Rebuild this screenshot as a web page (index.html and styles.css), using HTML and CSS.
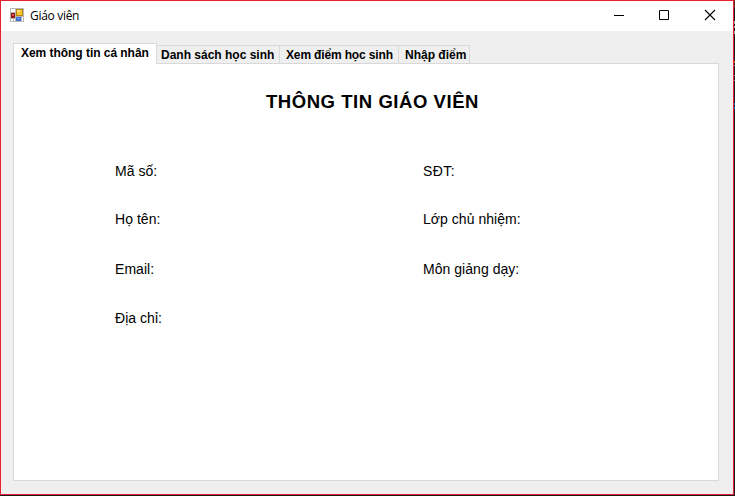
FILE: index.html
```
<!DOCTYPE html>
<html lang="vi">
<head>
<meta charset="utf-8">
<title>Giáo viên</title>
<link rel="stylesheet" href="styles.css">
</head>
<body>
<div class="window">
  <header class="titlebar">
    <svg class="app-icon" width="14" height="14" viewBox="0 0 14 14" shape-rendering="crispEdges">
      <path fill="#b9b9b9" d="M0 0h14v14H0z"/>
      <path fill="#fff" d="M1 1h4v3H1zM1 11h2v2H1zM4 11h1v2H4zM12 9h1v4h-1z"/>
      <path fill="#8f1a14" d="M1 5h4v5H1z"/>
      <path fill="#d9534a" d="M2 6h2v2H2z"/>
      <path fill="#b8860b" d="M6 1h7v7H6z"/>
      <path fill="#f5c62f" d="M7 2h5v5H7z"/>
      <path fill="#ffe68a" d="M7 2h3v2H7z"/>
      <path fill="#3a6fd0" d="M6 9h5v4H6z"/>
      <path fill="#76a8f5" d="M7 10h3v1H7z"/>
    </svg>
    <h1 class="title">Giáo viên</h1>
    <div class="controls">
      <svg width="46" height="30" viewBox="0 0 46 30"><path d="M19 14.5h10" stroke="#000"/></svg>
      <svg width="46" height="30" viewBox="0 0 46 30"><path d="M18.5 9.5h9v9h-9z" fill="none" stroke="#000"/></svg>
      <svg width="46" height="30" viewBox="0 0 46 30"><path d="M18 9l10 10M28 9L18 19" stroke="#000" stroke-width="1.1"/></svg>
    </div>
  </header>
  <main class="content">
    <nav class="tabs">
      <span class="tab tab-active">Xem thông tin cá nhân</span>
      <span class="tab tab-list">Danh sách học sinh</span>
      <span class="tab tab-view">Xem điểm học sinh</span>
      <span class="tab tab-enter">Nhập điểm</span>
    </nav>
    <section class="panel">
      <h2 class="heading">THÔNG TIN GIÁO VIÊN</h2>
      <div class="fields">
        <span>Mã số:</span><span class="phone">SĐT:</span>
        <span>Họ tên:</span><span>Lớp chủ nhiệm:</span>
        <span>Email:</span><span>Môn giảng dạy:</span>
        <span>Địa chỉ:</span>
      </div>
    </section>
  </main>
</div>
<div class="backdrop"></div>
</body>
</html>
```
FILE: styles.css
```
* { box-sizing: border-box; }
body {
  margin: 0;
  width: 735px;
  height: 496px;
  overflow: hidden;
  background: #1c1a20;
  color: #000;
  font-family: "Liberation Sans", Arial, sans-serif;
  display: flex;
}
.window {
  width: 734px;
  height: 495px;
  border: 1px solid #e81e32;
  background: #efefef;
  display: flex;
  flex-direction: column;
}
.titlebar {
  height: 30px;
  background: #fff;
  display: flex;
  align-items: flex-start;
  padding-left: 9px;
}
.app-icon { margin-top: 7px; }
.title {
  margin: 7px 0 0 6px;
  font: 400 12px/16px "Open Sans", "Noto Sans", sans-serif;
  letter-spacing: -0.3px;
}
.controls { margin-left: auto; display: flex; }
.content {
  flex: 1;
  display: flex;
  flex-direction: column;
  padding: 12px 14px 13px 12px;
}
.tabs { display: flex; align-items: flex-end; height: 20px; }
.tab {
  height: 18px;
  border: 1px solid #d9d9d9;
  border-width: 1px 1px 0 0;
  font-size: 12px;
  line-height: 18px;
  font-weight: 700;
  white-space: nowrap;
}
.tab-active {
  width: 144px;
  height: 21px;
  margin-bottom: -1px;
  padding-left: 7px;
  border-left-width: 1px;
  background: #fff;
  position: relative;
  z-index: 1;
  letter-spacing: -0.04px;
}
.tab-list { width: 123px; padding-left: 4px; }
.tab-view { width: 119px; padding-left: 6px; letter-spacing: -0.15px; }
.tab-enter { width: 71px; padding-left: 6px; }
.panel {
  flex: 1;
  border: 1px solid #d9d9d9;
  background: #fff;
}
.heading {
  margin: 26px 0 0 252px;
  font-size: 18.5px;
  line-height: 24px;
  font-weight: 700;
  letter-spacing: 0.55px;
  white-space: nowrap;
}
.fields {
  margin: 45px 0 0 101px;
  display: grid;
  grid-template-columns: 308px 1fr;
  grid-template-rows: 48px 50px 49px 24px;
  font-size: 14px;
  line-height: 24px;
  letter-spacing: 0.04px;
}
.phone { letter-spacing: 0.4px; }
.backdrop {
  width: 1px;
  height: 496px;
  background: linear-gradient(#602a20 0 8px, #1c1a20 8px 21px, #aaa 21px 24px, #1c1a20 24px 26px, #aaa 26px 28px, #1c1a20 28px 31px, #aaa 31px 34px, #1c1a20 34px 61px, #d27830 61px 63px, #1c1a20 63px 65px, #999 65px 66px, #1c1a20 66px 75px, #999 75px 76px, #1c1a20 76px 80px, #999 80px 81px, #1c1a20 81px 103px, #1475b8 103px 105px, #1c1a20 105px 107px, #1475b8 107px 109px, #1c1a20 109px);
}
```
